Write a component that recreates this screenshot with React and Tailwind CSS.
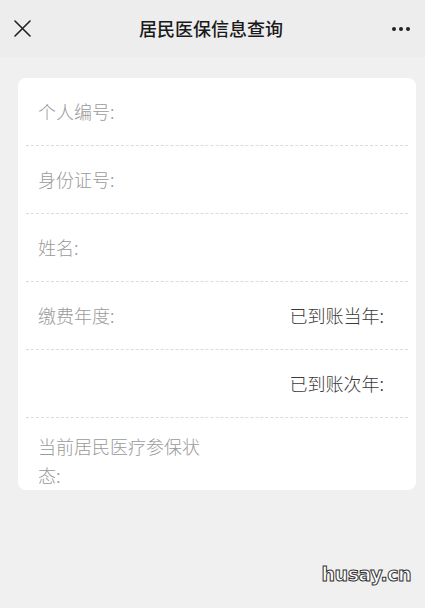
import React from 'react';

const font = { fontFamily: '"Noto Sans CJK SC", "Noto Sans", sans-serif' };

const Row = ({ left, right }) => (
    <div className="mx-2 flex h-[68px] items-center justify-between border-b border-dashed border-[#dcdcdc] pl-3 pr-6">
        <span className="text-[18px] font-light text-[#9a9a9a]">{left}</span>
        {right && <span className="text-[18px] font-light text-[#3a3a3a]">{right}</span>}
    </div>
);

export default function App() {
    return (
        <div className="relative min-h-[608px] w-[425px] bg-[#f0f0f0]" style={font}>
            <header className="flex h-[57px] items-center justify-between bg-[#ededed] px-[14px]">
                <svg width="17" height="17" viewBox="0 0 17 17" fill="none" stroke="#222" strokeWidth="1.6" strokeLinecap="round">
                    <path d="M1 1 L16 16 M16 1 L1 16" />
                </svg>
                <h1 className="text-[18px] font-medium text-[#1a1a1a]">居民医保信息查询</h1>
                <svg width="20" height="6" viewBox="0 0 20 6" fill="#222">
                    <circle cx="3" cy="3" r="2" />
                    <circle cx="10" cy="3" r="2" />
                    <circle cx="17" cy="3" r="2" />
                </svg>
            </header>

            <div className="pl-[18px] pr-[9px] pt-[21px]">
                <div className="rounded-lg bg-white">
                    <Row left="个人编号:" />
                    <Row left="身份证号:" />
                    <Row left="姓名:" />
                    <Row left="缴费年度:" right="已到账当年:" />
                    <Row right="已到账次年:" />
                    <div className="mx-2 h-[72px] pl-3 pt-[14px]">
                        <p className="w-[170px] text-[18px] font-light leading-[29px] text-[#9a9a9a]">当前居民医疗参保状态:</p>
                    </div>
                </div>
            </div>

            <span
                className="absolute right-[14px] bottom-[20px] text-[19px] font-black tracking-tight text-white"
                style={{ fontFamily: '"DejaVu Sans", sans-serif', WebkitTextStroke: '1px #333' }}
            >
                husay.cn
            </span>
        </div>
    );
}
